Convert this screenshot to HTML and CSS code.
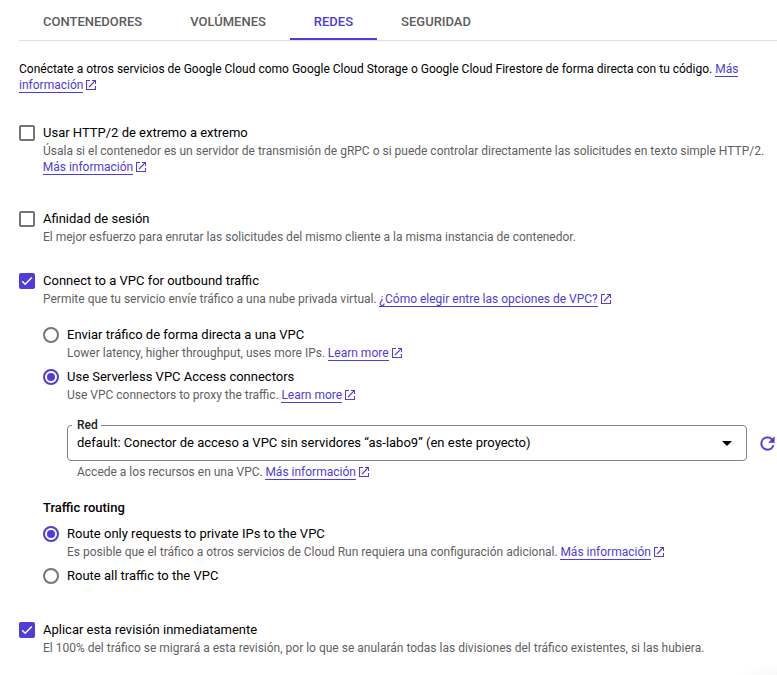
FILE: index.html
```html
<!DOCTYPE html>
<html lang="es">
<head>
<meta charset="utf-8">
<title>Redes</title>
<link rel="stylesheet" href="styles.css">
</head>
<body>
<svg class="defs" width="0" height="0">
  <symbol id="ext" viewBox="0 0 10 10"><path d="M4 .5H.5v9h9V6M6 .5h3.5V4M9.500 .5L3 7" fill="none" stroke="currentColor" stroke-width="1.1"/></symbol>
  <symbol id="check" viewBox="0 0 16 16"><path d="M3.200 8.300l3 3 6.600-6.900" fill="none" stroke="#fff" stroke-width="1.500"/></symbol>
</svg>
<main class="page">
  <nav class="tabs">
    <a class="tab">CONTENEDORES</a>
    <a class="tab">VOLÚMENES</a>
    <a class="tab active">REDES</a>
    <a class="tab">SEGURIDAD</a>
  </nav>
  <div class="intro">
    <div>Conéctate a otros servicios de Google Cloud como Google Cloud Storage o Google Cloud Firestore de forma directa con tu código. <a class="link">Más</a></div>
    <div><a class="link">información</a><svg class="ext"><use href="#ext"/></svg></div>
  </div>

  <section class="option">
    <span class="box"></span>
    <div><div class="label">Usar HTTP/2 de extremo a extremo</div>
    <div class="desc">Úsala si el contenedor es un servidor de transmisión de gRPC o si puede controlar directamente las solicitudes en texto simple HTTP/2.<br><a class="link">Más información</a><svg class="ext"><use href="#ext"/></svg></div></div>
  </section>

  <section class="option">
    <span class="box"></span>
    <div><div class="label">Afinidad de sesión</div>
    <div class="desc">El mejor esfuerzo para enrutar las solicitudes del mismo cliente a la misma instancia de contenedor.</div></div>
  </section>

  <section class="option vpc">
    <span class="box on"><svg><use href="#check"/></svg></span>
    <div><div class="label">Connect to a VPC for outbound traffic</div>
    <div class="desc">Permite que tu servicio envíe tráfico a una nube privada virtual. <a class="link">¿Cómo elegir entre las opciones de VPC?</a><svg class="ext"><use href="#ext"/></svg></div></div>
  </section>

  <div class="nested">
    <div class="option radio-row">
      <span class="radio"></span>
      <div><div class="label">Enviar tráfico de forma directa a una VPC</div>
      <div class="desc">Lower latency, higher throughput, uses more IPs. <a class="link">Learn more</a><svg class="ext"><use href="#ext"/></svg></div></div>
    </div>
    <div class="option radio-row">
      <span class="radio on"></span>
      <div><div class="label">Use Serverless VPC Access connectors</div>
      <div class="desc">Use VPC connectors to proxy the traffic. <a class="link">Learn more</a><svg class="ext"><use href="#ext"/></svg></div></div>
    </div>

    <div class="field-row">
      <div class="select">
        <span class="select-label">Red</span>
        <span class="select-value">default: Conector de acceso a VPC sin servidores “as-labo9” (en este proyecto)</span>
        <span class="arrow"></span>
      </div>
      <svg class="refresh" viewBox="0 0 24 24"><path d="M17.650 6.350A7.958 7.958 0 0 0 12 4a8 8 0 1 0 7.730 10h-2.080A6 6 0 1 1 12 6c1.660 0 3.140.69 4.220 1.780L13 11h7V4z" fill="currentColor" stroke="currentColor" stroke-width=".3"/></svg>
    </div>
    <div class="desc hint">Accede a los recursos en una VPC. <a class="link">Más información</a><svg class="ext"><use href="#ext"/></svg></div>

    <h2 class="heading">Traffic routing</h2>
    <div class="option radio-row">
      <span class="radio on"></span>
      <div><div class="label">Route only requests to private IPs to the VPC</div>
      <div class="desc">Es posible que el tráfico a otros servicios de Cloud Run requiera una configuración adicional. <a class="link">Más información</a><svg class="ext"><use href="#ext"/></svg></div></div>
    </div>
    <div class="option radio-row">
      <span class="radio"></span>
      <div class="label">Route all traffic to the VPC</div>
    </div>
  </div>

  <section class="option apply">
    <span class="box on"><svg><use href="#check"/></svg></span>
    <div><div class="label">Aplicar esta revisión inmediatamente</div>
    <div class="desc">El 100% del tráfico se migrará a esta revisión, por lo que se anularán todas las divisiones del tráfico existentes, si las hubiera.</div></div>
  </section>
</main>
</body>
</html>
```
FILE: styles.css
```css
* { box-sizing: border-box; }
body {
  margin: 0;
  height: 675px;
  overflow: hidden;
  background: radial-gradient(ellipse 40px 12px at 777px 675px, #f8f8f8, #fff) #fff;
  color: #000;
  font-family: Roboto, "Liberation Sans", sans-serif;
  font-size: 13px;
}
.defs { display: block; }
.page { padding-left: 19px; }
.tabs {
  display: flex;
  height: 41px;
  border-bottom: 1px solid #e0e0e0;
}
.tab {
  height: 40px;
  padding: 2px 24px 0;
  line-height: 40px;
  font-weight: 500;
  color: #5c5c5c;
}
.tab.active { color: #4f3cdb; border-bottom: 2px solid #4f3cdb; }
.intro {
  margin: 20px 0 30px;
  font-size: 12px;
  line-height: 16px;
  white-space: nowrap;
}
.link { color: #4f3cdb; border-bottom: 1px solid #4f3cdb; }
.desc .link { margin-left: -.3px; }
.ext {
  width: 10px;
  height: 10px;
  margin-left: 3px;
  vertical-align: -1px;
  color: #4f3cdb;
}
.option {
  display: flex;
  gap: 8px;
  margin-bottom: 34px;
}
.option.vpc { margin: -8px 0 18px; }
.label { font-size: 13px; line-height: 20px; }
.desc {
  font-size: 12px;
  line-height: 16px;
  color: #5f5f5f;
  white-space: nowrap;
}
.box, .radio {
  flex: none;
  width: 16px;
  height: 16px;
  margin-top: 2px;
  border: 2px solid #757575;
}
.box { border-radius: 2px; }
.box.on { border: 0; background: #4f3cdb; }
.box svg { display: block; width: 16px; height: 16px; }
.radio { border-radius: 50%; }
.radio.on {
  padding: 2px;
  border-color: #4f3cdb;
}
.radio.on::before {
  content: "";
  display: block;
  width: 8px;
  height: 8px;
  border-radius: 50%;
  background: #4f3cdb;
}
.nested { padding-left: 24px; }
.radio-row { margin-bottom: 6px; }
.field-row {
  display: flex;
  align-items: center;
  gap: 10px;
  margin: 22px 0 3px 24px;
}
.select {
  position: relative;
  display: flex;
  flex: none;
  align-items: center;
  justify-content: space-between;
  width: 680px;
  height: 36px;
  padding: 0 14px 0 9px;
  border: 1px solid #80868b;
  border-radius: 4px;
}
.select-value { padding-bottom: 2px; }
.select-label {
  position: absolute;
  top: -9px;
  left: 4px;
  padding: 0 3px 0 5px;
  background: #fff;
  font-size: 12px;
  line-height: 16px;
  font-weight: 500;
  color: #202124;
}
.arrow {
  border: 5px solid transparent;
  border-top-color: #000;
  border-bottom: 0;
}
.refresh {
  flex: none;
  width: 21px;
  height: 21px;
  color: #4f3cdb;
}
.hint { margin-left: 34px; }
.heading {
  margin: 18px 0 6px;
  font-size: 13px;
  line-height: 20px;
  font-weight: 500;
}
.apply { margin-top: 34px; }
```
